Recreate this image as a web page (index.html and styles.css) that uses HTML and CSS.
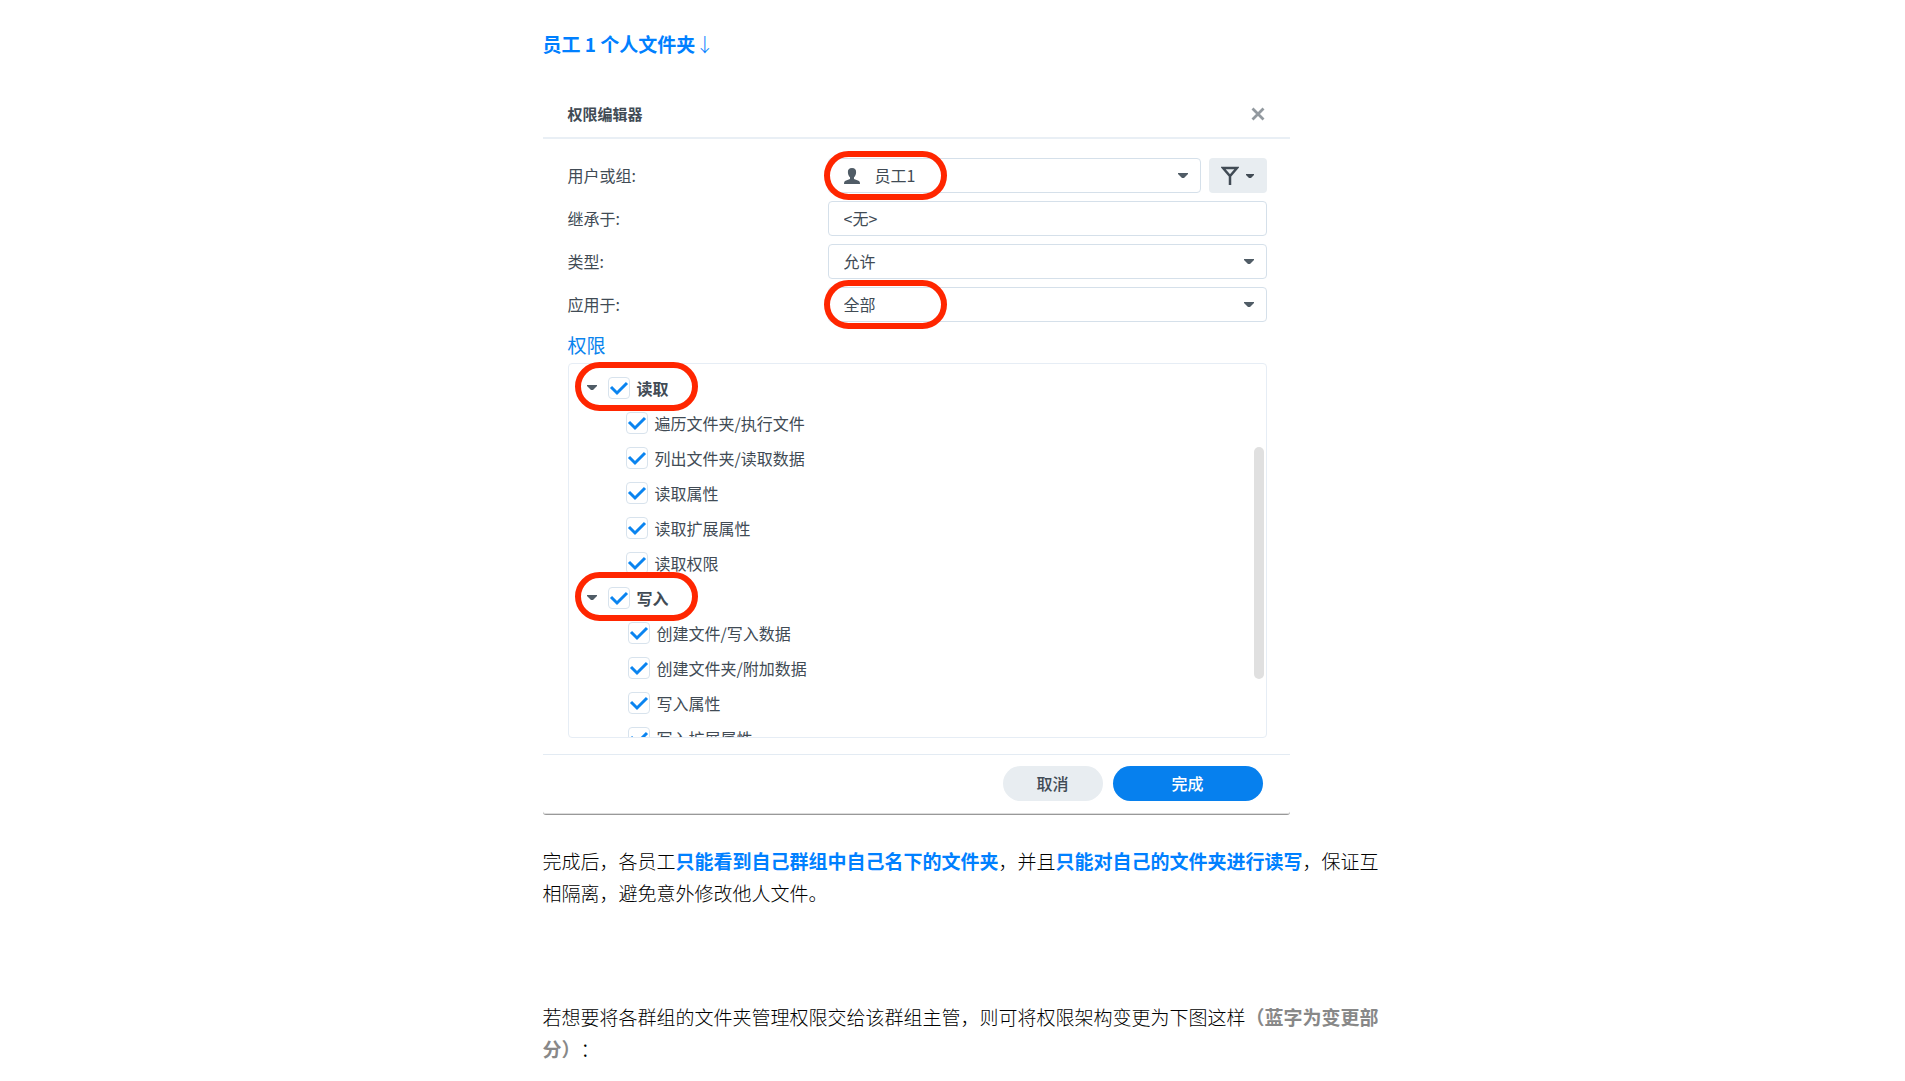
FILE: index.html
```
<!DOCTYPE html>
<html lang="zh-CN">
<head>
    <meta charset="UTF-8">
    <meta name="viewport" content="width=device-width, initial-scale=1.0">
    <title>员工个人文件夹权限</title>
    <link rel="stylesheet" href="styles.css">
</head>
<body>
    <main class="article">
        <p class="caption"><strong>员工 1 个人文件夹</strong><span class="arrow">↓</span></p>

        <section class="dialog" aria-label="权限编辑器">
            <header class="dialog-header">
                <h2>权限编辑器</h2>
                <button class="close" type="button" aria-label="关闭">
                    <svg width="14" height="14" viewBox="0 0 14 14"><path d="M1.500 1.500L12.500 12.500M12.500 1.500L1.500 12.500" stroke="#92999f" stroke-width="2.800" fill="none"/></svg>
                </button>
            </header>

            <form class="dialog-body">
                <div class="row">
                    <label for="user">用户或组:</label>
                    <div class="field with-user marked">
                        <select id="user"><option>员工1</option></select>
                        <svg class="user-icon" width="16" height="16" viewBox="0 0 16 16"><path d="M8 0C5 0 3.700 1.700 3.900 4.300C4 6.700 4.900 8.300 6 9.300V11L1.500 12.700C.5 13.200 0 14 0 16H16C16 14 15.500 13.200 14.500 12.700L10 11V9.300C11.100 8.300 12 6.700 12.100 4.300C12.300 1.700 11 0 8 0Z" fill="#505c66"/></svg>
                        <svg class="caret" width="10" height="5" viewBox="0 0 10 5"><path d="M0 0H10V1L6 5H4L0 1Z" fill="#505c66"/></svg>
                    </div>
                    <button class="filter" type="button" aria-label="筛选">
                        <svg width="18" height="20" viewBox="0 0 18 20"><path d="M2 2H16L9 10Z M9 9V19" stroke="#414b55" stroke-width="2.500" fill="none"/></svg>
                        <svg width="8" height="4" viewBox="0 0 8 4"><path d="M0 0H8V1L5 4H3L0 1Z" fill="#414b55"/></svg>
                    </button>
                </div>
                <div class="row">
                    <label for="inherit">继承于:</label>
                    <div class="field">
                        <input id="inherit" type="text" value="&lt;无&gt;" readonly>
                    </div>
                </div>
                <div class="row">
                    <label for="type">类型:</label>
                    <div class="field">
                        <select id="type"><option>允许</option></select>
                        <svg class="caret" width="10" height="5" viewBox="0 0 10 5"><path d="M0 0H10V1L6 5H4L0 1Z" fill="#505c66"/></svg>
                    </div>
                </div>
                <div class="row">
                    <label for="apply">应用于:</label>
                    <div class="field marked">
                        <select id="apply"><option>全部</option></select>
                        <svg class="caret" width="10" height="5" viewBox="0 0 10 5"><path d="M0 0H10V1L6 5H4L0 1Z" fill="#505c66"/></svg>
                    </div>
                </div>

                <h3>权限</h3>
                <div class="tree">
                    <div class="tree-list">
                        <div class="group marked">
                            <svg width="10" height="5" viewBox="0 0 10 5"><path d="M0 0H10V1L6 5H4L0 1Z" fill="#505c66"/></svg>
                            <label><input type="checkbox" checked>读取</label>
                        </div>
                        <ul class="read">
                            <li><label><input type="checkbox" checked>遍历文件夹/执行文件</label></li>
                            <li><label><input type="checkbox" checked>列出文件夹/读取数据</label></li>
                            <li><label><input type="checkbox" checked>读取属性</label></li>
                            <li><label><input type="checkbox" checked>读取扩展属性</label></li>
                            <li><label><input type="checkbox" checked>读取权限</label></li>
                        </ul>
                        <div class="group marked">
                            <svg width="10" height="5" viewBox="0 0 10 5"><path d="M0 0H10V1L6 5H4L0 1Z" fill="#505c66"/></svg>
                            <label><input type="checkbox" checked>写入</label>
                        </div>
                        <ul class="write">
                            <li><label><input type="checkbox" checked>创建文件/写入数据</label></li>
                            <li><label><input type="checkbox" checked>创建文件夹/附加数据</label></li>
                            <li><label><input type="checkbox" checked>写入属性</label></li>
                            <li><label><input type="checkbox" checked>写入扩展属性</label></li>
                        </ul>
                    </div>
                    <div class="scroll-thumb"></div>
                </div>
            </form>

            <footer class="dialog-footer">
                <button class="cancel" type="button">取消</button>
                <button class="done" type="button">完成</button>
            </footer>
        </section>

        <p>完成后，各员工<strong>只能看到自己群组中自己名下的文件夹</strong>，并且<strong>只能对自己的文件夹进行读写</strong>，保证互相隔离，避免意外修改他人文件。</p>
        <p class="next">若想要将各群组的文件夹管理权限交给该群组主管，则可将权限架构变更为下图这样<strong class="note">（蓝字为变更部分）</strong>：</p>
    </main>
</body>
</html>
```
FILE: styles.css
```
/* General styling */
*,
*::after {
    box-sizing: border-box;
}
body {
    margin: 0;
    background: #fff;
    color: #000;
    font-family: "Noto Sans CJK SC", sans-serif;
    font-size: 19px;
    font-weight: 300;
    line-height: 32px;
    text-spacing-trim: space-all;
}
.article {
    max-width: 860px;
    margin: 0 auto;
    padding: 28px 0 0 20px;
}
p {
    margin: 0;
}
strong {
    color: #0080ff;
    font-weight: bold;
}
.note {
    color: #888;
}
.arrow {
    color: #0080ff;
}
.next {
    margin-top: 92px;
}

/* Permission dialog */
.dialog {
    max-width: 747px;
    margin: 30px 0;
    border-bottom: 1px solid #999;
    border-radius: 0 0 3px 3px;
    box-shadow: inset 0 -1px #ddd;
    color: #414b55;
    font-size: 16px;
    font-weight: 400;
}
.dialog-header {
    display: flex;
    align-items: center;
    justify-content: space-between;
    height: 49px;
    padding: 0 25px;
    border-bottom: 2px solid #e9eff5;
}
.dialog-header h2 {
    margin: 0;
    font-size: 15px;
    font-weight: bold;
}
.close {
    display: flex;
    padding: 0;
    border: 0;
    background: none;
}
.dialog-body {
    padding: 19px 23px 16px 25px;
}
.row {
    display: flex;
    gap: 8px;
    margin-bottom: 8px;
}
.row > label {
    flex: 0 0 252px;
    line-height: 35px;
}
.field {
    position: relative;
    flex: 1;
}
.field select,
.field input {
    display: block;
    width: 100%;
    height: 35px;
    padding: 0 15px 2px;
    appearance: none;
    border: 1px solid #d5e0ea;
    border-radius: 4px;
    background: #fff;
    color: #414b55;
    font: inherit;
}
.with-user select {
    padding-left: 46px;
}
.user-icon {
    position: absolute;
    left: 16px;
    top: 10px;
}
.caret {
    position: absolute;
    right: 13px;
    top: 15px;
}
.filter {
    display: flex;
    align-items: center;
    justify-content: center;
    gap: 7px;
    width: 58px;
    height: 35px;
    padding: 0;
    border: 0;
    border-radius: 4px;
    background: #e8edf1;
}

/* Red rings drawn over the marked options */
.marked::after {
    content: "";
    position: absolute;
    z-index: 1;
    left: -4px;
    top: -7px;
    width: 123px;
    height: 49px;
    border: 6px solid #ff2600;
    border-radius: 25px;
    pointer-events: none;
}

/* Permission tree */
.dialog h3 {
    margin: 0 0 3px;
    color: #0a84ee;
    font-size: 19px;
    font-weight: 400;
    line-height: 30px;
}
.tree {
    position: relative;
    border: 1px solid #e6edf5;
    border-radius: 4px;
}
.tree-list {
    height: 373px;
    padding-top: 6px;
    clip-path: inset(-10px 0 0 0);
}
.tree ul {
    margin: 0;
    padding: 0;
    list-style: none;
}
.tree .read {
    padding-left: 57px;
}
.tree .write {
    padding-left: 59px;
}
.group {
    position: relative;
    display: flex;
    align-items: center;
    gap: 11px;
    height: 35px;
    padding-left: 18px;
    font-weight: bold;
}
.group.marked::after {
    left: 6px;
    top: -8px;
}
.tree label {
    display: flex;
    align-items: center;
    gap: 7px;
    height: 35px;
}
.tree input {
    width: 22px;
    height: 22px;
    margin: 0;
    appearance: none;
    border: 1px solid #d8e3ed;
    border-radius: 4px;
    background: #fff url("data:image/svg+xml,%3Csvg xmlns='http://www.w3.org/2000/svg' viewBox='0 0 20 20'%3E%3Cpath d='M2 9L8 15L18 5' fill='none' stroke='%230a84f0' stroke-width='3'/%3E%3C/svg%3E") center / 20px 20px no-repeat;
}
.scroll-thumb {
    position: absolute;
    top: 83px;
    right: 2px;
    width: 10px;
    height: 232px;
    border-radius: 5px;
    background: #e0e0e0;
}

/* Dialog buttons */
.dialog-footer {
    display: flex;
    justify-content: flex-end;
    gap: 10px;
    padding: 11px 27px 13px;
    border-top: 1px solid #e3ebf3;
}
.dialog-footer button {
    height: 35px;
    padding: 0 0 2px;
    border: 0;
    border-radius: 18px;
    font: inherit;
    font-weight: 500;
}
.dialog-footer .cancel {
    width: 100px;
    background: #e8edf1;
    color: #414b55;
}
.dialog-footer .done {
    width: 150px;
    background: #0680ee;
    color: #fff;
}
```
